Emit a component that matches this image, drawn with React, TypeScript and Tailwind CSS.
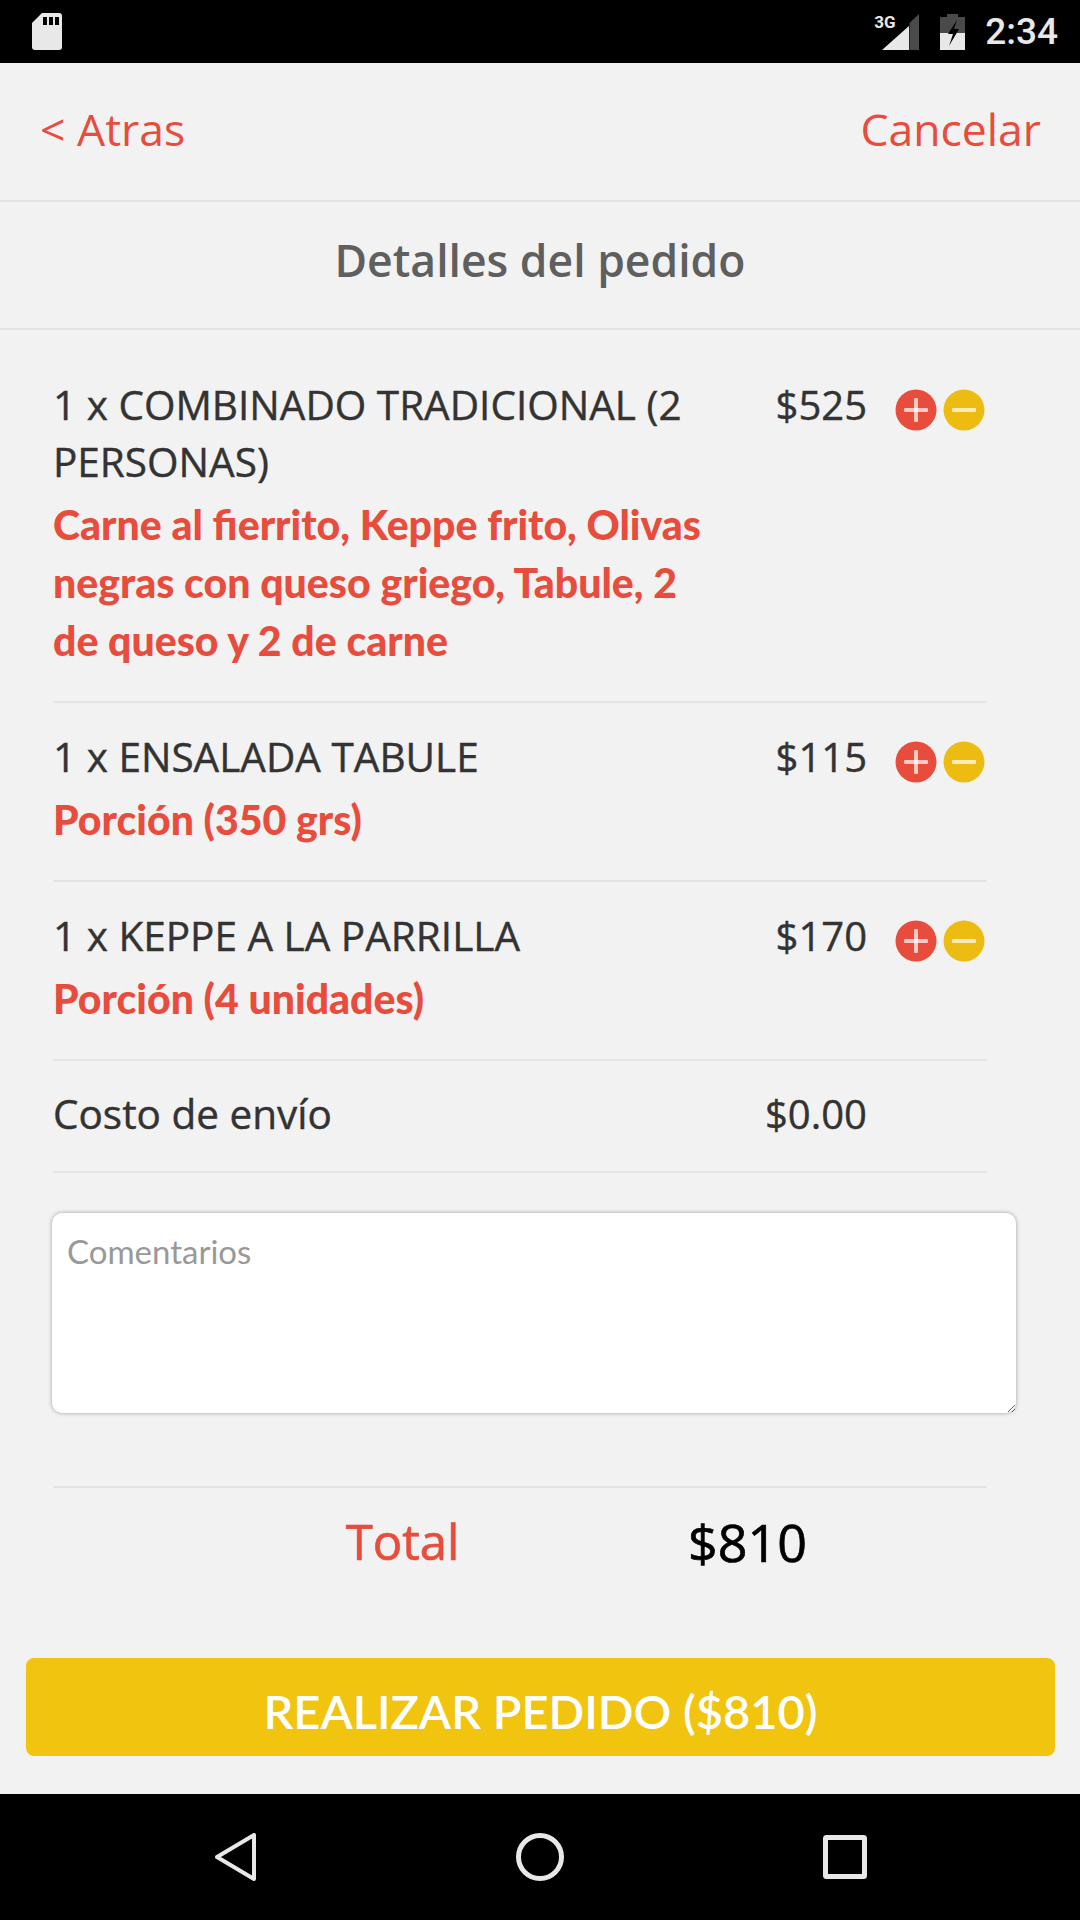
const RED = "text-[#e74c3c]";

interface Item {
  name: string;
  price: string;
  detail: string;
}

const ITEMS: Item[] = [
  {
    name: "1 x COMBINADO TRADICIONAL (2 PERSONAS)",
    price: "$525",
    detail: "Carne al fierrito, Keppe frito, Olivas negras con queso griego, Tabule, 2 de queso y 2 de carne",
  },
  { name: "1 x ENSALADA TABULE", price: "$115", detail: "Porción (350 grs)" },
  { name: "1 x KEPPE A LA PARRILLA", price: "$170", detail: "Porción (4 unidades)" },
];

function StatusBar() {
  return (
    <div className="flex h-[63px] shrink-0 items-center justify-between bg-black pl-[32px] pr-[22px]">
      <svg width="30" height="37" viewBox="0 0 30 37">
        <path d="M10 0h17a3 3 0 0 1 3 3v31a3 3 0 0 1-3 3H3a3 3 0 0 1-3-3V10z" fill="#e8e8e8" />
        <rect x="11" y="4" width="4" height="8" fill="#000" />
        <rect x="17" y="4" width="4" height="8" fill="#000" />
        <rect x="23" y="4" width="4" height="8" fill="#000" />
      </svg>
      <div className="flex items-center">
        <div className="relative h-[36px] w-[37px]">
          <span className="absolute left-[-8px] top-[0px] font-['Roboto',sans-serif] text-[17px] font-bold leading-[17px] text-[#e8e8e8]">3G</span>
          <svg width="37" height="36" viewBox="0 0 37 36">
            <path d="M37 0v36H27.500V9z" fill="#4a4a4a" />
            <path d="M27 12v24H0z" fill="#e8e8e8" />
          </svg>
        </div>
        <svg className="ml-[21px]" width="25" height="36" viewBox="0 0 25 36">
          <path d="M7 0h11v3h7v16H0V3h7z" fill="#4a4a4a" />
          <path d="M0 19h25v17H0z" fill="#e8e8e8" />
          <path d="M17 6l-9 14h5l-4 12 10-17h-5z" fill="#000" />
        </svg>
        <span className="ml-[20px] font-['Roboto',sans-serif] text-[37px] font-medium leading-none text-[#e8e8e8]">2:34</span>
      </div>
    </div>
  );
}

function RoundButton({ color, plus }: { color: string; plus?: boolean }) {
  return (
    <svg className="blur-[0.5px]" width="42" height="42" viewBox="0 0 42 42">
      <circle cx="21" cy="21" r="20.5" fill={color} />
      <rect x="9" y="19" width="24" height="4" rx="1" fill="#fff" opacity="0.7" />
      {plus && <rect x="19" y="9" width="4" height="24" rx="1" fill="#fff" opacity="0.7" />}
    </svg>
  );
}

function OrderRow({ item }: { item: Item }) {
  return (
    <div className="flex border-b-2 border-[#e4e4e4] pb-[31px] pt-[25px]">
      <div className="w-[660px]">
        <div className="text-[40.500px] leading-[57px] text-[#333] [-webkit-text-stroke:0.4px_#333]">{item.name}</div>
        <div className={`mt-[6px] font-['Lato',sans-serif] text-[41px] font-black leading-[58px] ${RED}`}>{item.detail}</div>
      </div>
      <div className="w-[154px] text-right text-[40px] leading-[57px] text-[#333] [-webkit-text-stroke:0.4px_#333]">{item.price}</div>
      <div className="ml-[28px] flex h-[42px] translate-y-[13px] gap-[6px]">
        <RoundButton color="#e74c3c" plus />
        <RoundButton color="#ecbc12" />
      </div>
    </div>
  );
}

function NavBar() {
  return (
    <div className="flex h-[126px] shrink-0 items-center justify-center gap-[258px] bg-black pl-[1px]">
      <svg width="42" height="48" viewBox="0 0 42 48" fill="none" stroke="#e8e8e8" strokeWidth="4" strokeLinejoin="round">
        <path d="M39 2v44L2 24z" />
      </svg>
      <svg width="50" height="48" viewBox="0 0 50 48" fill="none" stroke="#e8e8e8" strokeWidth="5">
        <circle cx="25" cy="24" r="21.500" />
      </svg>
      <svg width="44" height="44" viewBox="0 0 44 44" fill="none" stroke="#e8e8e8" strokeWidth="5" strokeLinejoin="round">
        <rect x="2.500" y="2.500" width="39" height="39" rx="1" />
      </svg>
    </div>
  );
}

export default function App() {
  return (
    <div className="flex h-[1920px] w-[1080px] flex-col overflow-hidden bg-[#f2f2f2] font-['Open_Sans',sans-serif]">
      <StatusBar />

      <div className={`flex h-[139px] shrink-0 items-center justify-between border-b-2 border-[#e4e4e4] pb-[5px] pl-[40px] pr-[39px] text-[44.500px] ${RED}`}>
        <span>&lt; Atras</span>
        <span>Cancelar</span>
      </div>
      <div className="flex h-[128px] shrink-0 items-center justify-center border-b-2 border-[#e4e4e4] pb-[10px] text-[44.500px] font-semibold text-[#5f5f5f]">
        Detalles del pedido
      </div>

      <div className="flex-1 pt-[21px]">
        <div className="ml-[53px] w-[934px]">
          {ITEMS.map((item) => (
            <OrderRow key={item.name} item={item} />
          ))}
          <div className="flex h-[112px] items-center border-b-2 border-[#e4e4e4] pb-[4px] text-[40.500px] text-[#333] [-webkit-text-stroke:0.4px_#333]">
            <span className="w-[660px]">Costo de envío</span>
            <span className="w-[154px] text-right text-[40px]">$0.00</span>
          </div>
        </div>

        <textarea
          placeholder="Comentarios"
          className="ml-[52px] mt-[40px] block h-[200px] w-[964px] rounded-[10px] bg-white px-[15px] py-[19px] font-['Lato',sans-serif] text-[33px] leading-[38px] shadow-[0_0_4px_rgba(0,0,0,0.35)] outline-none placeholder:text-[#999]"
        />

        <div className="ml-[53px] mt-[73px] w-[934px] border-t-2 border-[#e4e4e4] pl-[177px] pt-[15px]">
          <div className="flex items-center text-center">
            <span className={`w-[345px] text-[49px] [-webkit-text-stroke:0.7px_#e74c3c] ${RED}`}>Total</span>
            <span className="w-[345px] text-[52px] text-black [-webkit-text-stroke:0.7px_#000]">$810</span>
          </div>
        </div>
      </div>

      <div className="mb-[38px] ml-[26px] mr-[25px] flex h-[98px] shrink-0 items-center justify-center rounded-[8px] bg-[#f1c40f] pt-[8px] font-['Lato',sans-serif] text-[47px] font-semibold text-white">
        REALIZAR PEDIDO ($810)
      </div>

      <NavBar />
    </div>
  );
}
